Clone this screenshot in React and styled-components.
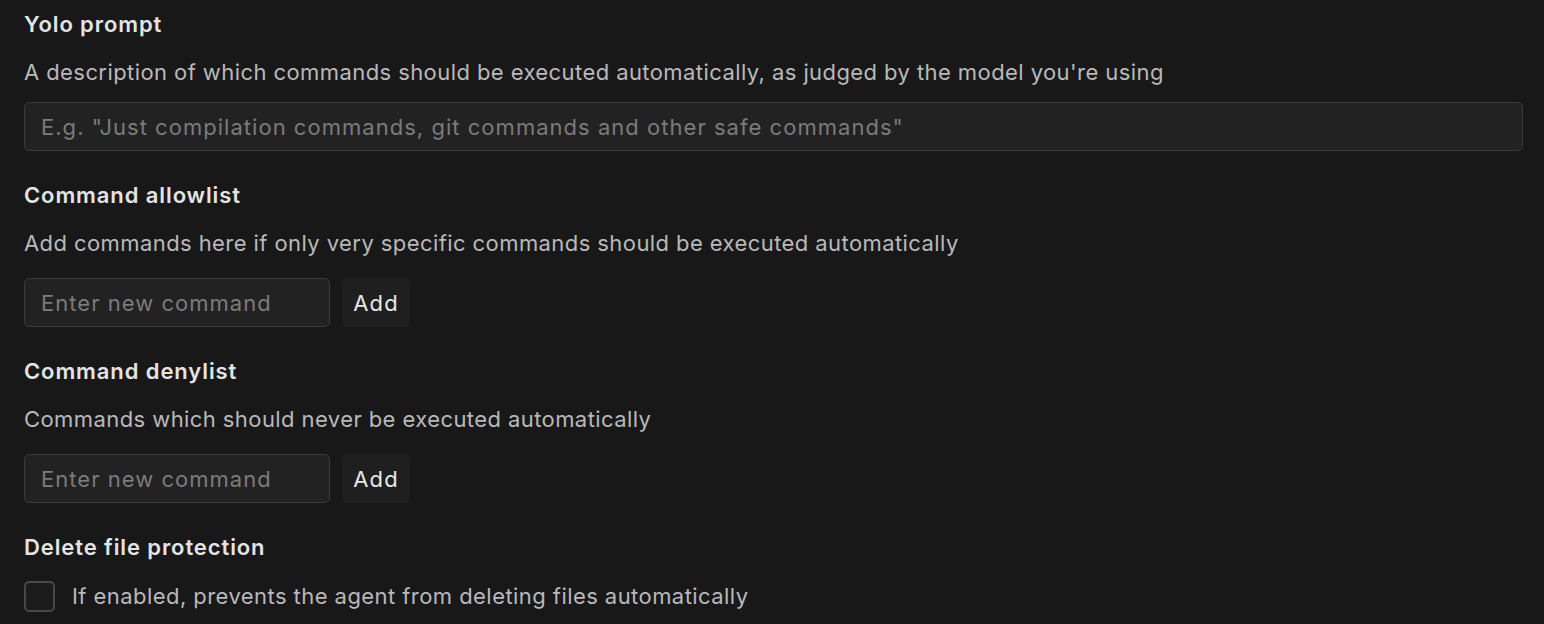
import React from 'react';
import styled, { createGlobalStyle } from 'styled-components';

const GlobalStyle = createGlobalStyle`
  body {
    margin: 0;
    background: #181818;
    font-family: Inter, "Noto Sans", sans-serif;
  }
`;

const Page = styled.div`
  display: flex;
  flex-direction: column;
  padding: 8px 21px 0 24px;
  min-height: 616px;
  background: #181818;
`;

const Section = styled.section`
  display: flex;
  flex-direction: column;
  margin-bottom: 28px;
`;

const Title = styled.h3`
  margin: 0;
  font-size: 22px;
  line-height: 32px;
  font-weight: 600;
  letter-spacing: 0.9px;
  color: #e4e4e6;
`;

const Description = styled.p`
  margin: 16px 0 ${(props) => props.$gap}px;
  font-size: 22px;
  line-height: 32px;
  font-weight: 400;
  letter-spacing: 0.42px;
  color: #b9b9bb;
`;

const TextInput = styled.input`
  box-sizing: border-box;
  width: ${(props) => props.$width || '100%'};
  height: 49px;
  padding: 0 16px;
  background: #222222;
  border: 1px solid #3b3b3b;
  border-radius: 5px;
  color: #e4e4e6;
  font-family: inherit;
  font-size: 22px;
  letter-spacing: 1.03px;
  outline: none;

  &::placeholder {
    color: #7b7b7d;
  }
`;

const InputRow = styled.div`
  display: flex;
  align-items: center;
  gap: 12px;
`;

const AddButton = styled.button`
  box-sizing: border-box;
  height: 49px;
  width: 68px;
  padding: 0;
  background: #1f1f1f;
  border: none;
  border-radius: 5px;
  color: #e8e8ea;
  font-family: inherit;
  font-size: 22px;
  letter-spacing: 1.2px;
  cursor: pointer;
`;

const CheckRow = styled.label`
  display: flex;
  align-items: center;
  gap: 17px;
  margin-top: 17px;
  font-size: 22px;
  line-height: 32px;
  letter-spacing: 0.44px;
  color: #b9b9bb;
  cursor: pointer;
`;

const CheckBox = styled.span`
  box-sizing: border-box;
  width: 31px;
  height: 31px;
  border: 2px solid #48484a;
  border-radius: 5px;
  background: #1c1c1c;
`;

function CommandList({ title, description }) {
  return (
    <Section>
      <Title>{title}</Title>
      <Description $gap={19}>{description}</Description>
      <InputRow>
        <TextInput $width="306px" placeholder="Enter new command" />
        <AddButton>Add</AddButton>
      </InputRow>
    </Section>
  );
}

export default function App() {
  return (
    <>
      <GlobalStyle />
      <Page>
        <Section>
          <Title>Yolo prompt</Title>
          <Description $gap={14}>
            A description of which commands should be executed automatically, as judged by the model you're using
          </Description>
          <TextInput placeholder={'E.g. "Just compilation commands, git commands and other safe commands"'} />
        </Section>
        <CommandList
          title="Command allowlist"
          description="Add commands here if only very specific commands should be executed automatically"
        />
        <CommandList
          title="Command denylist"
          description="Commands which should never be executed automatically"
        />
        <div>
          <Title>Delete file protection</Title>
          <CheckRow>
            <CheckBox />
            If enabled, prevents the agent from deleting files automatically
          </CheckRow>
        </div>
      </Page>
    </>
  );
}
